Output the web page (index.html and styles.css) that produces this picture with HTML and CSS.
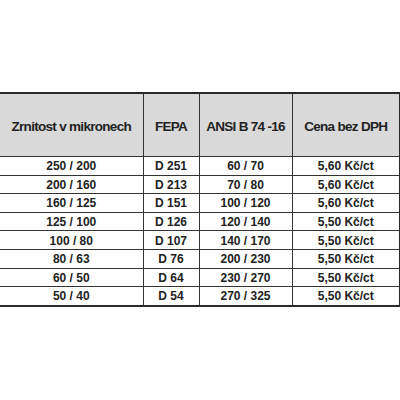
FILE: index.html
```html
<!DOCTYPE html>
<html lang="cs">
<head>
<meta charset="utf-8">
<link rel="stylesheet" href="styles.css">
</head>
<body>
<div class="page">
<table class="price">
<colgroup>
<col class="c1"><col class="c2"><col class="c3"><col class="c4">
</colgroup>
<thead>
<tr><th>Zrnitost v mikronech</th><th>FEPA</th><th>ANSI B 74 -16</th><th>Cena bez DPH</th></tr>
</thead>
<tbody>
<tr><td>250 / 200</td><td>D 251</td><td>60 / 70</td><td>5,60 Kč/ct</td></tr>
<tr><td>200 / 160</td><td>D 213</td><td>70 / 80</td><td>5,60 Kč/ct</td></tr>
<tr><td>160 / 125</td><td>D 151</td><td>100 / 120</td><td>5,60 Kč/ct</td></tr>
<tr><td>125 / 100</td><td>D 126</td><td>120 / 140</td><td>5,50 Kč/ct</td></tr>
<tr><td>100 / 80</td><td>D 107</td><td>140 / 170</td><td>5,50 Kč/ct</td></tr>
<tr><td>80 / 63</td><td>D 76</td><td>200 / 230</td><td>5,50 Kč/ct</td></tr>
<tr><td>60 / 50</td><td>D 64</td><td>230 / 270</td><td>5,50 Kč/ct</td></tr>
<tr><td>50 / 40</td><td>D 54</td><td>270 / 325</td><td>5,50 Kč/ct</td></tr>
</tbody>
</table>
</div>
</body>
</html>
```
FILE: styles.css
```css
html, body {
  margin: 0;
  padding: 0;
  background: #fff;
}
.page {
  width: 400px;
  height: 400px;
  overflow: hidden;
  padding-top: 92px;
  box-sizing: border-box;
}
.price {
  margin-left: -2px;
  width: 401px;
  table-layout: fixed;
  border-collapse: collapse;
  font-family: "Liberation Sans", Arial, sans-serif;
  font-weight: bold;
  color: #222;
  border: 2px solid #2a2a2a;
}
.c1 { width: 144px; }
.c2 { width: 56px; }
.c3 { width: 93px; }
.c4 { width: 108px; }
.price th, .price td {
  border: 1px solid #333;
  text-align: center;
  padding: 0;
}
.price th {
  background: #d9d9d9;
  font-size: 13.5px;
  letter-spacing: -0.7px;
  height: 60px;
  font-weight: bold;
  padding-top: 2px;
}
.price td {
  font-size: 12px;
  height: 16.6px;
  padding-top: 1px;
}
```
